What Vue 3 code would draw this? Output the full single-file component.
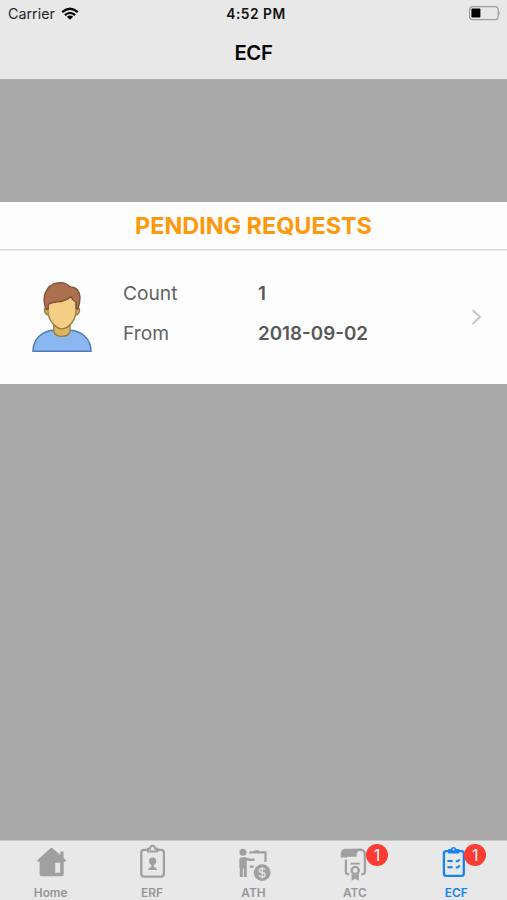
<script setup>
const tabs = [
  { id: 'home', label: 'Home' },
  { id: 'erf', label: 'ERF' },
  { id: 'ath', label: 'ATH' },
  { id: 'atc', label: 'ATC', badge: 1 },
  { id: 'ecf', label: 'ECF', badge: 1, active: true },
]
</script>

<template>
  <div class="screen">
    <header class="top">
      <div class="status">
        <div class="carrier">
          <span>Carrier</span>
          <svg width="18" height="14" viewBox="0 0 18 14" fill="none" stroke="#080808" stroke-width="2.3">
            <path d="M1.2 5.1Q9-1.6 16.8 5.1M3.9 8.2Q9 3.6 14.1 8.2" />
            <path d="M9 12.7L5.8 9.7Q9 7.3 12.2 9.7Z" fill="#080808" stroke="none" />
          </svg>
        </div>
        <time class="time">4:52 PM</time>
        <svg class="battery" width="32" height="15" viewBox="0 0 32 15">
          <rect x=".6" y=".6" width="28.6" height="13" rx="3.3" fill="none" stroke="#9c9c9c" stroke-width="1.2" />
          <rect x="2.4" y="2.6" width="9" height="9" rx="1" fill="#000" />
          <path d="M30.3 5q1.7 2.1 0 4.2z" fill="#999" />
        </svg>
      </div>
      <h1 class="title">ECF</h1>
    </header>

    <main class="content">
      <section class="card">
        <h2 class="heading">PENDING REQUESTS</h2>
        <div class="row">
          <svg class="avatar" width="62" height="74" viewBox="0 0 62 74">
            <path d="M2 70.3C2 57.5 12 49.3 24 49.3H38C50 49.3 60 57.5 60 70.3Z" fill="#8bb7f0" stroke="#4e7ab5" stroke-width="1.4" />
            <path d="M22.8 43H39V50.5Q38 55.4 31 55.4T22.8 50.5Z" fill="#dbb65f" stroke="#967a44" stroke-width="1.3" />
            <path d="M16.5 26.5Q13 26.5 13.5 29.8T17.8 34.5M45.5 26.5Q49 26.5 48.5 29.8T44.2 34.5" fill="#dbb65f" stroke="#967a44" stroke-width="1.3" />
            <path d="M17 20V30C17 39.5 25 47.8 31 47.8S45 39.5 45 30V17L31 11Z" fill="#f5ce85" stroke="#967a44" stroke-width="1.3" />
            <path d="M15.2 28.5C12.8 24 12.4 16 14.5 11.5C19 .2 33-1 39 5.9C45.5 5.8 49 10.5 49 16.5C49 21.5 48 25 46.8 28.5L45.2 27.5V21.5Q41.5 19.5 39.8 15.8C34 21.4 29 20.4 23.5 21.3Q18 22 17.2 24V28Z" fill="#ad704e" stroke="#805239" stroke-width="1.4" stroke-linejoin="round" />
          </svg>
          <dl class="details">
            <dt>Count</dt><dd>1</dd>
            <dt>From</dt><dd>2018-09-02</dd>
          </dl>
          <svg class="chevron" width="11" height="17" viewBox="0 0 11 17" fill="none" stroke="#c6c6c8" stroke-width="1.9">
            <path d="M1.5 1L9 8L1.5 15" />
          </svg>
        </div>
      </section>
    </main>

    <nav class="tabs">
      <a v-for="tab in tabs" :key="tab.id" class="tab" :class="[tab.id, { active: tab.active }]">
        <svg class="icon" width="40" height="36" viewBox="0 0 40 36" fill="none" stroke="currentColor" stroke-width="2">
          <g v-if="tab.id === 'home'" fill="currentColor" stroke="none">
            <path fill-rule="evenodd" d="M19.4 5.2Q20.5 4.2 21.6 5.2L29.3 12V8.5H32.5V14.8L35 17.2Q35.3 18.8 33.8 18.8H32.7V31.5Q32.7 33.3 31 33.3H10.3Q8.6 33.3 8.6 31.5V18.8H7.3Q5.7 18.6 6.5 17ZM24.2 19.8V29.8H29.2V19.8Z" />
          </g>
          <g v-else-if="tab.id === 'erf'">
            <rect x="9.3" y="6.8" width="22.6" height="26.8" rx="2.8" stroke-width="2.3" />
            <path d="M16 8.4V5.7H18Q18.4 2.8 20.6 2.8T23.2 5.7H25.2V8.4Z" fill="#e8e8e8" />
            <circle cx="20.6" cy="18.2" r="3.6" fill="currentColor" stroke="none" />
            <path d="M20.6 19V26" stroke-width="2.6" />
            <path d="M17 26.2Q17.1 25.2 19.6 24.8H21.6Q24.1 25.2 24.2 26.2Z" fill="currentColor" stroke-width="1.4" />
          </g>
          <g v-else-if="tab.id === 'ath'">
            <circle cx="9.9" cy="9.2" r="3.5" fill="currentColor" stroke="none" />
            <path d="M8 14.2H13L16 15.4H21.5V18H16L13.8 17.4V34H10.8V25.5H9.8V34H6.8V25.5L6.3 24V16Z" fill="currentColor" stroke="none" />
            <path d="M16.3 9.3H32.5V19M16.8 23.7H20.8" stroke-width="2.2" />
            <path d="M21.5 8.2H26" />
            <circle cx="29.2" cy="29.6" r="8.4" fill="currentColor" stroke="none" />
            <path d="M32 26.7Q31.3 25.4 29.2 25.4Q26.3 25.4 26.3 27.4Q26.3 29.2 29.2 29.5Q32.1 29.8 32.1 31.9Q32.1 33.9 29.2 33.9Q26.8 33.9 26.1 32.2M29.2 23.7V35.5" stroke="#e2e2e2" stroke-width="1.4" />
          </g>
          <g v-else-if="tab.id === 'atc'">
            <path d="M10 5.8H27Q21.5 7.5 21.5 13.8H12V14.5H5.8V11Q5.8 6.5 10 5.8Z" fill="currentColor" stroke="none" />
            <path d="M22 6.9H26Q29.9 7.2 29.9 11.5V29Q29.7 31.4 26.2 31.4M10.9 16.5V29Q11 31.2 14.2 31.4" stroke-width="2.3" />
            <path d="M15.5 20.6H24.8" stroke-width="1.9" />
            <circle cx="20.2" cy="27.5" r="3.6" stroke-width="2.3" />
            <path d="M16.5 31V37.8L20.2 35.8L23.9 37.8V31L20.2 32.3Z" fill="currentColor" stroke="none" />
          </g>
          <g v-else>
            <rect x="7.9" y="8.1" width="19.9" height="24.7" rx="2.4" stroke-width="2.3" />
            <path d="M12.8 10V6.6H15.1Q15.4 4.6 17.5 4.6T19.9 6.6H22.7V10Z" fill="currentColor" stroke-width="1.2" />
            <circle cx="17.6" cy="6.6" r="1" fill="#e8e8e8" stroke="none" />
            <path d="M11.4 18H16.6M19.8 18.2H21.6L23.8 16.4M11.4 24.2H16.6M19.8 24.4H21.6L23.8 22.6" stroke-width="2" />
          </g>
        </svg>
        <span class="label">{{ tab.label }}</span>
        <span v-if="tab.badge" class="badge">{{ tab.badge }}</span>
      </a>
    </nav>
  </div>
</template>

<style>
body { margin: 0; }
</style>

<style scoped>
.screen {
  display: flex;
  flex-direction: column;
  width: 507px;
  height: 900px;
  overflow: hidden;
  background: #a9a9a9;
  font-family: Inter, "Liberation Sans", sans-serif;
}
.top {
  height: 79px;
  background: #e8e8e8;
}
.status {
  display: grid;
  grid-template-columns: 1fr auto 1fr;
  align-items: center;
  height: 27px;
  padding: 0 6px 0 8px;
}
.carrier {
  display: flex;
  align-items: center;
  gap: 6px;
  color: #272727;
  font-size: 14.3px;
  line-height: 26px;
}
.time {
  padding-left: 3px;
  color: #111;
  font-size: 13.8px;
  font-weight: 600;
  letter-spacing: .5px;
  line-height: 28px;
}
.battery { justify-self: end; margin-top: -1px; }
.title {
  margin: 0;
  padding-top: 12px;
  color: #050505;
  font-size: 20.3px;
  font-weight: 600;
  line-height: 27px;
  letter-spacing: -.3px;
  text-align: center;
}
.content { flex: 1; padding-top: 123px; }
.card { height: 182px; background: #fdfdfd; }
.heading {
  box-sizing: border-box;
  height: 48px;
  margin: 0;
  border-bottom: 1px solid #d9d9d9;
  box-shadow: 0 1px #ececec;
  color: #ff980b;
  font-size: 23.4px;
  font-weight: 700;
  line-height: 47px;
  text-align: center;
}
.row {
  display: flex;
  align-items: flex-start;
  height: 134px;
  padding: 31px 25px 0 31px;
  box-sizing: border-box;
}
.details {
  display: grid;
  grid-template-columns: 134px 1fr;
  grid-auto-rows: 40px;
  flex: 1;
  margin: -7px 0 0 30px;
  color: #626262;
  font-size: 19.2px;
  line-height: 38px;
}
.details dd {
  margin: 0;
  padding-left: 1px;
  color: #585858;
  font-size: 18.8px;
  font-weight: 600;
  line-height: 40px;
}
.chevron { margin: 28px 0 0; }
.tabs {
  display: grid;
  grid-template-columns: repeat(5, 1fr);
  box-sizing: border-box;
  height: 60px;
  border-top: 1px solid #c8c8c8;
  background: #e8e8e8;
}
.tab {
  position: relative;
  display: flex;
  flex-direction: column;
  align-items: center;
  padding-top: 2px;
  color: #a0a0a0;
}
.tab.active { color: #1683f5; }
.icon { display: block; overflow: visible; }
.label {
  margin-top: 6px;
  color: #969696;
  font-size: 11.9px;
  font-weight: 600;
  line-height: 15px;
}
.active .label { color: #1683f5; }
.badge {
  position: absolute;
  top: 3px;
  left: calc(50% + 11px);
  width: 22px;
  height: 22px;
  border-radius: 50%;
  background: #fc3b33;
  color: #fff;
  font-size: 16px;
  line-height: 22px;
  text-align: center;
}
.ecf .badge { left: calc(50% + 8px); }
</style>
